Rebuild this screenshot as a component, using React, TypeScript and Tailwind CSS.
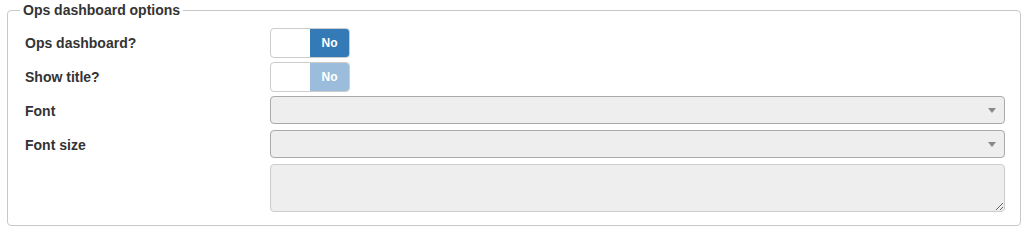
import React from "react";

type ToggleProps = {
  dimmed?: boolean;
};

function Toggle({ dimmed = false }: ToggleProps) {
  return (
    <div className="flex h-[30px] w-[80px] overflow-hidden rounded-[4px] border border-[#ccc] bg-white">
      <div className="flex-1" />
      <div
        className={
          dimmed
            ? "flex w-[39px] items-center justify-center bg-[#9bbddb] text-[12px] font-bold text-white"
            : "flex w-[39px] items-center justify-center bg-[#337ab7] text-[12px] font-bold text-white"
        }
      >
        No
      </div>
    </div>
  );
}

function FakeSelect() {
  return (
    <div className="flex h-[28px] w-full items-center justify-end rounded-[4px] border border-[#aaa] bg-[#eee] pr-[8px]">
      <svg width="8" height="5" viewBox="0 0 8 5">
        <path d="M0 0 L8 0 L4 5 Z" fill="#888" />
      </svg>
    </div>
  );
}

function Row({ label, children }: { label?: string; children: React.ReactNode }) {
  return (
    <div className="flex min-h-[30px] items-start">
      <div className="flex h-[30px] w-[245px] shrink-0 items-center text-[14px] font-bold">{label}</div>
      <div className="flex-1">{children}</div>
    </div>
  );
}

export default function App() {
  return (
    <div
      className="bg-white px-[7px] text-[#333]"
      style={{ fontFamily: '"Liberation Sans", Arial, sans-serif' }}
    >
      <fieldset className="rounded-[4px] border border-[#c8c8c8] pb-[13px] pl-[17px] pr-[15px]">
        <legend className="-ml-[5px] px-[3px] text-[14px] font-bold leading-[20px]">
          Ops dashboard options
        </legend>
        <div className="mt-[8px] flex flex-col gap-[4px]">
          <Row label="Ops dashboard?">
            <Toggle />
          </Row>
          <Row label="Show title?">
            <Toggle dimmed />
          </Row>
          <Row label="Font">
            <FakeSelect />
          </Row>
          <Row label="Font size">
            <FakeSelect />
          </Row>
          <Row>
            <textarea
              disabled
              className="block h-[48px] w-full rounded-[4px] border border-[#ccc] bg-[#eee]"
            />
          </Row>
        </div>
      </fieldset>
    </div>
  );
}
